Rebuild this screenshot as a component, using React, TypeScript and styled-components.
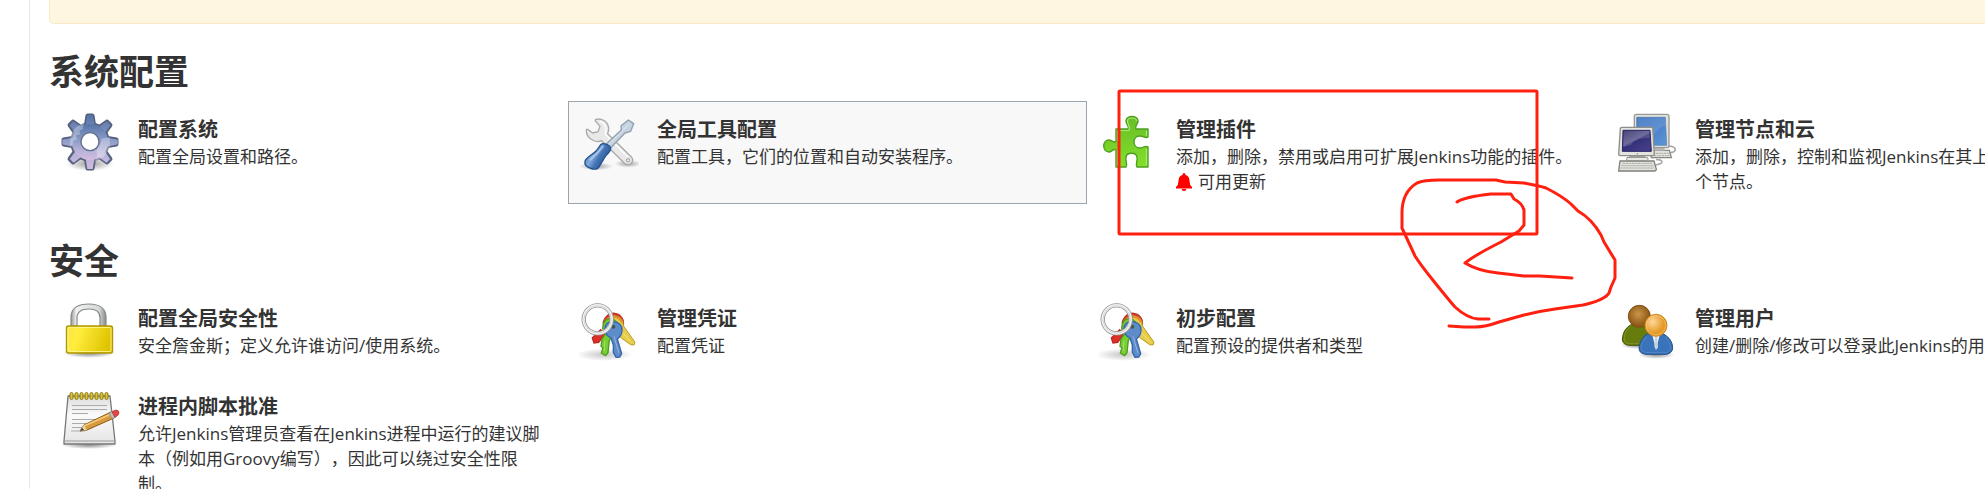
import React from "react";
import styled, { createGlobalStyle } from "styled-components";

const GlobalStyle = createGlobalStyle`
  * { box-sizing: border-box; }
  body {
    margin: 0;
    overflow-x: hidden;
    background: #fff;
    color: #333;
    font-family: "Open Sans", "Noto Sans CJK SC", sans-serif;
    font-size: 17px;
    line-height: 25px;
    text-spacing-trim: space-all;
  }
`;

const Page = styled.div`
  position: relative;
  display: flex;
  min-height: 100vh;
  overflow: hidden;
`;

const SideEdge = styled.aside`
  flex: 0 0 30px;
  border-right: 1px solid #eaeaea;
`;

const Main = styled.main`
  flex: 1 0 0;
  min-width: calc(4 * 519px + 38px);
  padding: 0 19px;
`;

const Notice = styled.div`
  height: 24px;
  margin-bottom: 26px;
  background: #fff6e1;
  border: 1px solid #f8e8c4;
  border-top: 0;
  border-radius: 0 0 5px 5px;
`;

const Section = styled.section`
  margin-bottom: 35px;
`;

const Heading = styled.h1`
  margin: 0 0 7px;
  font-size: 35px;
  line-height: 44px;
  font-weight: 700;
`;

const Grid = styled.div`
  display: grid;
  grid-template-columns: repeat(4, minmax(519px, 1fr));
  row-gap: 6px;
`;

const Item = styled.a<{ $active?: boolean }>`
  display: flex;
  gap: 18px;
  min-height: 82px;
  padding: 10px 19px 9px 10px;
  border: 1px solid ${(p) => (p.$active ? "#9aa5b0" : "transparent")};
  background: ${(p) => (p.$active ? "#f8f8f8" : "transparent")};
  color: inherit;
  text-decoration: none;
`;

const Icon = styled.svg`
  flex: 0 0 60px;
  width: 60px;
  height: 60px;
`;

const Copy = styled.div`
  flex: 1;
  padding-top: 4px;
`;

const Title = styled.h2`
  margin: 0;
  font-size: 20px;
  line-height: 28px;
  font-weight: 700;
`;

const Text = styled.p`
  margin: 0;
`;

const Update = styled.p`
  display: flex;
  align-items: center;
  gap: 6px;
  margin: 0;
`;

const Bell = styled.svg`
  width: 16px;
  height: 18px;
  fill: #f00;
`;

const Markup = styled.svg`
  position: absolute;
  left: 1110px;
  top: 80px;
  width: 520px;
  height: 260px;
  pointer-events: none;
  fill: none;
  stroke: #ff2010;
  stroke-width: 3;
  stroke-linecap: round;
  stroke-linejoin: round;
`;

const gearTeeth = [0, 45, 90, 135, 180, 225, 270, 315];

const GearIcon = () => (
  <Icon viewBox="30 21 180 180" aria-hidden="true">
    <defs>
      <linearGradient id="gear" x1="0" y1="0" x2="0" y2="1">
        <stop offset="0" stopColor="#5574a8" />
        <stop offset="0.4" stopColor="#8597c4" />
        <stop offset="0.75" stopColor="#b9b3da" />
        <stop offset="1" stopColor="#d3bcdc" />
      </linearGradient>
      <radialGradient id="gearShade">
        <stop offset="0" stopColor="#000" stopOpacity="0.4" />
        <stop offset="1" stopColor="#000" stopOpacity="0" />
      </radialGradient>
      <clipPath id="gearClip">
        <circle cx="120" cy="111" r="60" />
      </clipPath>
    </defs>
    <ellipse cx="120" cy="176" rx="72" ry="22" fill="url(#gearShade)" />
    <g fill="#687397" stroke="#56607f" strokeWidth="5" strokeLinejoin="round">
      {gearTeeth.map((a) => (
        <path key={a} d="M104 62L109 31Q110 28 113 28H127Q130 28 131 31L136 62Z" transform={`rotate(${a} 120 111)`} />
      ))}
      <circle cx="120" cy="111" r="57" />
    </g>
    <path
      fill="url(#gear)"
      d="M112 31H128L133 60L148 66L169 50L180 61L164 84L170 98L203 104V118L170 125L164 139L180 162L169 173L147 156L133 162L128 192H112L107 162L93 156L71 173L60 162L76 139L70 125L37 118V104L70 98L76 84L60 61L71 50L92 66L107 60Z"
    />
    <circle cx="120" cy="111" r="54" fill="url(#gear)" />
    <g clipPath="url(#gearClip)" fill="#fff">
      <path opacity="0.3" d="M66 55H102L98 73L88 78L91 88L78 91L82 103L70 108L68 119L58 125V60Z" />
      <path opacity="0.3" d="M182 96L155 101L151 118L139 139L142 155L131 171H170L185 140Z" />
    </g>
    <circle cx="120" cy="110" r="27" fill="#fff" stroke="#626d8b" strokeWidth="4" />
  </Icon>
);

const ToolsIcon = () => (
  <Icon viewBox="27 21 180 180" aria-hidden="true">
    <defs>
      <radialGradient id="toolShade">
        <stop offset="0" stopColor="#000" stopOpacity="0.35" />
        <stop offset="1" stopColor="#000" stopOpacity="0" />
      </radialGradient>
      <linearGradient id="handle" x1="0" y1="0" x2="1" y2="0.6">
        <stop offset="0" stopColor="#2d5fa3" />
        <stop offset="0.45" stopColor="#80a9dc" />
        <stop offset="0.65" stopColor="#4472b3" />
        <stop offset="1" stopColor="#24528e" />
      </linearGradient>
    </defs>
    <ellipse cx="78" cy="184" rx="52" ry="12" fill="url(#toolShade)" />
    <ellipse cx="174" cy="176" rx="40" ry="12" fill="url(#toolShade)" />
    <path
      d="M78 43C98 38 118 53 116 76L113 86L184 156C195 168 179 186 165 176L95 107C75 116 49 99 49 77C49 73 51 71 54 74L68 84L84 80L90 64L78 50C75 47 75 44 78 43Z"
      fill="#e9e9e9"
      stroke="#aaa"
      strokeWidth="4"
      strokeLinejoin="round"
    />
    <path d="M90 48C105 54 109 64 106 88L174 156" fill="none" stroke="#fff" strokeWidth="4" />
    <circle cx="174" cy="166" r="5" fill="#eee" stroke="#999" strokeWidth="3" />
    <path d="M108 118L154 75L153 62L175 45L191 56L182 79L165 84L121 130Z" fill="#c5d2df" stroke="#929fae" strokeWidth="4" strokeLinejoin="round" />
    <path d="M113 120L160 75L178 55" stroke="#e2eaf2" strokeWidth="3" fill="none" />
    <path
      d="M92 119C99 112 122 120 122 131C122 142 111 145 105 156L88 184C78 202 41 187 45 169C47 155 76 146 83 132Z"
      fill="url(#handle)"
      stroke="#24528e"
      strokeWidth="4"
    />
    <path d="M98 125C88 139 79 150 61 164" stroke="#bdd5f1" strokeWidth="6" strokeLinecap="round" opacity="0.7" fill="none" />
  </Icon>
);

const PuzzleIcon = () => (
  <Icon viewBox="0 0 60 60" aria-hidden="true">
    <defs>
      <linearGradient id="puzzle" x1="0" y1="0" x2="0" y2="1">
        <stop offset="0" stopColor="#67bd27" />
        <stop offset="1" stopColor="#83e02b" />
      </linearGradient>
    </defs>
    <path
      d="M18 17H30C32 14 28 13 28 9C28 3 40 3 40 9C40 13 36 14 38 17H50V25C48 27 45 24 42 24C34 24 34 36 42 36C45 36 48 33 50 35V55H39C37 52 40 49 39 45C38 40 29 40 28 45C27 49 30 52 28 55H18V38C15 36 14 40 11 40C4 40 4 28 11 28C14 28 16 32 18 29Z"
      fill="url(#puzzle)"
      stroke="#4f9e22"
      strokeWidth="1.4"
      strokeLinejoin="round"
    />
    <path
      d="M19.500 29V18.500H31C33 15 29.500 13 29.500 9C29.500 5 38.500 5 38.500 9M48.500 18.500V24M48.500 37V53.500M19.500 53.500V38"
      fill="none"
      stroke="#a9ea77"
      strokeWidth="1.200"
    />
  </Icon>
);

const ComputersIcon = () => (
  <Icon viewBox="21 21 180 180" aria-hidden="true">
    <defs>
      <linearGradient id="screenBack" x1="0" y1="0" x2="1" y2="1">
        <stop offset="0" stopColor="#3568b4" />
        <stop offset="1" stopColor="#5e97d8" />
      </linearGradient>
      <linearGradient id="screenFront" x1="0" y1="0" x2="0.7" y2="1">
        <stop offset="0" stopColor="#252059" />
        <stop offset="0.5" stopColor="#5e5b91" />
        <stop offset="0.55" stopColor="#33307a" />
        <stop offset="1" stopColor="#433f87" />
      </linearGradient>
    </defs>
    <path d="M170 124C188 121 202 130 193 139C189 143 180 141 175 146M138 164C154 162 161 171 151 176L138 180" fill="none" stroke="#aaa" strokeWidth="5" />
    <path d="M118 136H178L184 158H124Z" fill="#e4e4df" stroke="#888984" strokeWidth="4" />
    <path d="M122 145H176M124 152H180" stroke="#a8a8a2" strokeWidth="3" strokeDasharray="6 2" />
    <path d="M134 126H164V137H134Z" fill="#b9b9b5" />
    <rect x="73" y="28" width="104" height="100" rx="6" fill="#dfe0dc" stroke="#989a96" strokeWidth="4" />
    <path d="M80 37H166L170 121H80Z" fill="url(#screenBack)" stroke="#527fad" strokeWidth="2" />
    <path d="M82 39H164L168 62Q135 67 120 119H82Z" fill="#85b0e4" opacity="0.35" />
    <path d="M30 168H132L139 193Q139 198 134 198H26Z" fill="#e3e3df" stroke="#80817c" strokeWidth="4" />
    <path d="M38 175H128M34 182H130M31 189H132" stroke="#a9aaa4" strokeWidth="3" strokeDasharray="7 2" />
    <path d="M58 148H105V163H58Z" fill="#aaa" />
    <rect x="50" y="157" width="64" height="10" rx="4" fill="#e8e8e5" stroke="#898a86" strokeWidth="3" />
    <path d="M36 67H128L133 148Q133 152 128 152H31Q26 152 26 148L31 71Q31 67 36 67Z" fill="#e3e3df" stroke="#8e8f89" strokeWidth="4" />
    <path d="M39 76H120L124 139H37Z" fill="url(#screenFront)" stroke="#292666" strokeWidth="3" />
    <path d="M41 78H118L120 98Q75 98 64 119L40 127Z" fill="#9a98bb" opacity="0.3" />
    <circle cx="82" cy="146" r="2" fill="#888" />
  </Icon>
);

const LockIcon = () => (
  <Icon viewBox="0 0 60 60" aria-hidden="true">
    <defs>
      <linearGradient id="lock" x1="0" y1="0" x2="1" y2="0.200">
        <stop offset="0" stopColor="#f8e544" />
        <stop offset="0.3" stopColor="#ffed3d" />
        <stop offset="1" stopColor="#dfc400" />
      </linearGradient>
      <linearGradient id="lockMetal">
        <stop offset="0" stopColor="#949896" />
        <stop offset="0.15" stopColor="#f1f1ef" />
        <stop offset="0.8" stopColor="#d6d9d7" />
        <stop offset="1" stopColor="#868b88" />
      </linearGradient>
      <radialGradient id="lockShade">
        <stop offset="0" stopColor="#000" stopOpacity="0.5" />
        <stop offset="1" stopColor="#000" stopOpacity="0" />
      </radialGradient>
    </defs>
    <ellipse cx="29" cy="52" rx="26" ry="5" fill="url(#lockShade)" />
    <path
      d="M11 25V16C11 7 18 3 29 3C40 3 46 8 46 16V25H40V17C40 11 36 8 29 8C21 8 17 11 17 17V25Z"
      fill="url(#lockMetal)"
      stroke="#858987"
      strokeWidth="1.200"
    />
    <rect x="6.500" y="25" width="46" height="27" rx="2" fill="url(#lock)" stroke="#b09800" strokeWidth="1.400" />
    <rect x="8" y="26.500" width="43" height="24" rx="1" fill="none" stroke="#fff69b" strokeWidth="1" opacity="0.8" />
  </Icon>
);

const KeysIcon = () => (
  <Icon viewBox="27 18 180 180" aria-hidden="true">
    <defs>
      <radialGradient id="keyShade">
        <stop offset="0" stopColor="#000" stopOpacity="0.22" />
        <stop offset="1" stopColor="#000" stopOpacity="0" />
      </radialGradient>
    </defs>
    <ellipse cx="103" cy="179" rx="85" ry="19" fill="url(#keyShade)" />
    <path d="M92 104L104 118L86 142L72 144L67 129Z" fill="#df3028" stroke="#bb2725" strokeWidth="4" />
    <path d="M99 82Q107 54 132 54Q162 58 161 88L150 112L104 104Z" fill="#dc3528" stroke="#b52a22" strokeWidth="3" />
    <path d="M101 86Q112 62 134 62Q161 66 160 92L195 142L192 150L182 149L154 129L130 100Z" fill="#e7ce49" stroke="#bd9825" strokeWidth="3" />
    <path d="M104 82Q116 64 134 66Q150 68 156 82" fill="none" stroke="#e8902a" strokeWidth="6" />
    <path d="M98 100Q99 72 121 71Q144 74 146 101L118 136L114 173L107 182L94 174L99 158L93 154L96 132L105 119Z" fill="#78cf31" stroke="#509c23" strokeWidth="4" />
    <path d="M105 102Q105 80 128 80Q157 82 156 106Q156 122 142 132L155 176L149 186L138 187L130 172V151L123 129Q105 121 105 102Z" fill="#5e8bc9" stroke="#3467a8" strokeWidth="4" />
    <path d="M132 124L147 175M105 137L102 169M158 113L181 140" fill="none" stroke="#fff" strokeWidth="3" opacity="0.35" />
    <circle cx="130" cy="95" r="6" fill="#386044" />
    <circle cx="83" cy="73" r="42" fill="none" stroke="#969696" strokeWidth="13" />
    <circle cx="83" cy="73" r="42" fill="none" stroke="#f1f1f1" strokeWidth="8" />
    <circle cx="83" cy="73" r="41" fill="none" stroke="#c9c9c9" strokeWidth="2" />
  </Icon>
);

const UsersIcon = () => (
  <Icon viewBox="21 18 180 180" aria-hidden="true">
    <defs>
      <radialGradient id="headBack" cx="0.45" cy="0.4">
        <stop offset="0" stopColor="#ca954d" />
        <stop offset="1" stopColor="#8f5b16" />
      </radialGradient>
      <radialGradient id="headFront" cx="0.35" cy="0.35">
        <stop offset="0" stopColor="#ffd89c" />
        <stop offset="1" stopColor="#e59a26" />
      </radialGradient>
      <radialGradient id="userShade">
        <stop offset="0" stopColor="#000" stopOpacity="0.45" />
        <stop offset="1" stopColor="#000" stopOpacity="0" />
      </radialGradient>
    </defs>
    <ellipse cx="80" cy="150" rx="48" ry="12" fill="url(#userShade)" />
    <ellipse cx="139" cy="179" rx="54" ry="13" fill="url(#userShade)" />
    <path d="M63 89H113L132 130L120 151H55Q37 148 37 132Q39 102 63 89Z" fill="#667c0c" stroke="#425809" strokeWidth="3" />
    <path d="M62 95Q43 109 43 130Q43 143 57 146H88" fill="none" stroke="#8a9b38" strokeWidth="2" />
    <circle cx="88" cy="64" r="33" fill="url(#headBack)" stroke="#7e4e13" strokeWidth="3" />
    <path d="M112 117H161Q187 132 188 158Q188 173 170 178H108Q87 176 87 159Q91 129 112 117Z" fill="#3973b9" stroke="#204f8c" strokeWidth="3" />
    <path d="M111 125Q94 138 93 158Q94 170 110 173H167Q182 170 182 158Q179 136 166 126" fill="none" stroke="#5c8dc8" strokeWidth="2" />
    <path d="M127 120H149L138 164Z" fill="#f5f7fa" />
    <path d="M135 126H142L144 157L138 165L133 155Z" fill="#c7d2e0" />
    <circle cx="138" cy="91" r="33" fill="url(#headFront)" stroke="#cf851c" strokeWidth="3" />
    <circle cx="138" cy="91" r="29" fill="none" stroke="#ffe1a8" strokeWidth="2" opacity="0.6" />
  </Icon>
);

const rings = [11, 16, 21, 26, 31, 36, 41, 46];

const NotepadIcon = () => (
  <Icon viewBox="0 0 60 60" aria-hidden="true">
    <defs>
      <linearGradient id="paper" x1="0" y1="0" x2="0" y2="1">
        <stop offset="0" stopColor="#ddd" />
        <stop offset="0.4" stopColor="#fafafa" />
        <stop offset="1" stopColor="#e4e4e4" />
      </linearGradient>
      <radialGradient id="padShade">
        <stop offset="0" stopColor="#000" stopOpacity="0.45" />
        <stop offset="1" stopColor="#000" stopOpacity="0" />
      </radialGradient>
    </defs>
    <ellipse cx="29" cy="56" rx="28" ry="4" fill="url(#padShade)" />
    <path d="M8 7H50L55 52V55H4V52Z" fill="url(#paper)" stroke="#777" strokeWidth="1.300" strokeLinejoin="round" />
    <path d="M4 52H55" stroke="#999" strokeWidth="1" />
    {rings.map((x) => (
      <rect key={x} x={x - 1} y="3.500" width="3" height="7" rx="1.500" fill="#d9c238" stroke="#8f7b0b" strokeWidth="1" />
    ))}
    <path d="M12 16.500H47M12 20.500H47M12 24.500H28M12 30.500H43M12 34.500H39M12 38.500H32M11 42H25" stroke="#aaa" strokeWidth="1.200" />
    <path d="M20 42L24 36L51 23L54 29L27 41Z" fill="#d99b3d" stroke="#895817" strokeWidth="1" />
    <path d="M24 37L51 25" stroke="#f4cb78" strokeWidth="1.500" />
    <path d="M20 42L24 36L27 41Z" fill="#ead2a5" />
    <path d="M20 42L22 39L24 41Z" fill="#333" />
    <path d="M49 24L52 22.500L55 28.500L52 30Z" fill="#bbb" stroke="#777" strokeWidth="0.600" />
    <path d="M52 22.500L56 21Q59 21 59 24Q59 26 55 28.500Z" fill="#e84343" stroke="#a33" strokeWidth="0.700" />
  </Icon>
);

type Entry = {
  title: string;
  text: string;
  icon: React.FC;
  active?: boolean;
  update?: string;
};

const sections: { heading: string; entries: Entry[] }[] = [
  {
    heading: "系统配置",
    entries: [
      { title: "配置系统", text: "配置全局设置和路径。", icon: GearIcon },
      { title: "全局工具配置", text: "配置工具，它们的位置和自动安装程序。", icon: ToolsIcon, active: true },
      { title: "管理插件", text: "添加，删除，禁用或启用可扩展Jenkins功能的插件。", icon: PuzzleIcon, update: "可用更新" },
      { title: "管理节点和云", text: "添加，删除，控制和监视Jenkins在其上运行作业的各个节点。", icon: ComputersIcon },
    ],
  },
  {
    heading: "安全",
    entries: [
      { title: "配置全局安全性", text: "安全詹金斯；定义允许谁访问/使用系统。", icon: LockIcon },
      { title: "管理凭证", text: "配置凭证", icon: KeysIcon },
      { title: "初步配置", text: "配置预设的提供者和类型", icon: KeysIcon },
      { title: "管理用户", text: "创建/删除/修改可以登录此Jenkins的用户", icon: UsersIcon },
      {
        title: "进程内脚本批准",
        text: "允许Jenkins管理员查看在Jenkins进程中运行的建议脚本（例如用Groovy编写），因此可以绕过安全性限制。",
        icon: NotepadIcon,
      },
    ],
  },
];

export default function App() {
  return (
    <>
      <GlobalStyle />
      <Page lang="zh-CN">
        <SideEdge />
        <Main>
          <Notice />
          {sections.map((section) => (
            <Section key={section.heading}>
              <Heading>{section.heading}</Heading>
              <Grid>
                {section.entries.map(({ title, text, icon: Glyph, active, update }) => (
                  <Item key={title} href="#" $active={active}>
                    <Glyph />
                    <Copy>
                      <Title>{title}</Title>
                      <Text>{text}</Text>
                      {update && (
                        <Update>
                          <Bell viewBox="0 0 16 18" aria-hidden="true">
                            <path d="M8 0Q9.500 0 9.500 2Q13.500 3 13.500 8Q13.500 12 16 14V15.500H0V14Q2.500 12 2.500 8Q2.500 3 6.500 2Q6.500 0 8 0ZM5.500 16H10.500Q10 18 8 18T5.500 16Z" />
                          </Bell>
                          {update}
                        </Update>
                      )}
                    </Copy>
                  </Item>
                ))}
              </Grid>
            </Section>
          ))}
        </Main>
        <Markup viewBox="1110 80 520 260" aria-hidden="true">
          <rect x="1119" y="91" width="418" height="143" rx="1" />
          <path d="M1489 319L1478 319Q1467 318 1455 307Q1448 299 1432 279Q1420 264 1415 256L1402 228V213Q1402 192 1417 183Q1424 180 1439 180H1496L1505 182L1524 183Q1540 186 1546 188Q1562 196 1571 204L1578 211Q1592 219 1601 235L1604 242L1615 260V278L1611 287L1609 293Q1605 300 1583 305L1555 309Q1540 311 1524 315L1499 322Q1485 327 1476 327H1464L1449 326" />
          <path d="M1457 202Q1464 197 1491 194L1511 194L1514 199Q1522 203 1524 210V225L1519 231L1501 242Q1475 255 1465 263Q1478 271 1498 273L1524 276H1540L1572 278" />
        </Markup>
      </Page>
    </>
  );
}
